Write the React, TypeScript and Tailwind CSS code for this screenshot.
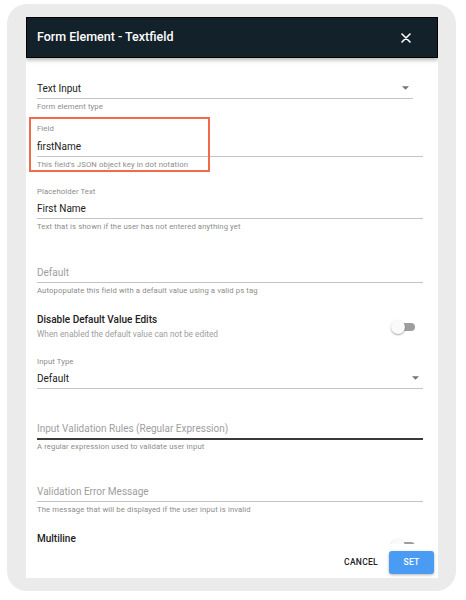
import React from 'react'

const font = { fontFamily: 'Roboto, "Noto Sans", Arial, sans-serif' }

function Caret({ className }: { className?: string }) {
    return (
        <svg viewBox="0 0 10 5" className={className} width="7" height="4">
            <path d="M0 0 L5 5 L10 0 Z" fill="#757575" />
        </svg>
    )
}

function Toggle() {
    return (
        <div className="relative w-[24px] h-[14px] flex items-center">
            <div className="ml-[4px] w-[20px] h-[8px] rounded-full bg-[#9e9e9e]"></div>
            <div className="absolute left-0 top-0 w-[14px] h-[14px] rounded-full bg-[#fafafa] shadow-[0_1px_2px_rgba(0,0,0,0.35)]"></div>
        </div>
    )
}

function Helper({ children, className = 'mt-[3px]' }: { children: React.ReactNode, className?: string }) {
    return <p className={`${className} text-[7.7px] leading-[10px] tracking-[0.12px] text-[#8c8c8c]`}>{children}</p>
}

function Label({ children }: { children: React.ReactNode }) {
    return <p className="text-[7.7px] leading-[10px] tracking-[0.1px] text-[#8c8c8c]">{children}</p>
}

export default function App() {
    return (
        <div className="min-h-screen bg-white pt-[4px] pl-[7px]" style={font}>
            <div className="w-[449px] h-[587px] rounded-[20px] bg-[#ebebeb] pl-[19px] pt-[13px]">
                <div className="w-[412px] h-[561px] bg-white flex flex-col overflow-hidden">
                    {/* Header */}
                    <div className="relative z-10 h-[41px] shrink-0 bg-[#13212a] border border-black shadow-[0_2px_4px_rgba(0,0,0,0.3)] flex items-center justify-between pl-[10px] pr-[26px]">
                        <h1 className="text-white text-[12.5px] font-medium">Form Element - Textfield</h1>
                        <svg viewBox="0 0 10 10" width="10" height="10">
                            <path d="M1 1 L9 9 M9 1 L1 9" stroke="white" strokeWidth="1.6" strokeLinecap="round" />
                        </svg>
                    </div>

                    {/* Content */}
                    <div className="relative h-[486px] shrink-0 overflow-hidden pl-[11px] pr-[15px] pt-[20px] text-[#212121]">
                        {/* Form element type */}
                        <div className="mr-[10px]">
                            <div className="h-[21px] border-b border-[#c4c4c4] flex items-center justify-between pr-[4px]">
                                <span className="text-[10px]">Text Input</span>
                                <Caret />
                            </div>
                            <Helper>Form element type</Helper>
                        </div>

                        {/* Field */}
                        <div className="relative mt-[12px]">
                            <div className="absolute left-[-8px] top-[-7px] w-[181px] h-[55px] border-2 border-[#f2694b]"></div>
                            <Label>Field</Label>
                            <div className="mt-[2px] h-[21px] border-b border-[#c4c4c4] flex items-center">
                                <span className="text-[10px]">firstName</span>
                            </div>
                            <Helper>This field's JSON object key in dot notation</Helper>
                        </div>

                        {/* Placeholder */}
                        <div className="mt-[17px]">
                            <Label>Placeholder Text</Label>
                            <div className="mt-[1px] h-[21px] border-b border-[#c4c4c4] flex items-center">
                                <span className="text-[10px]">First Name</span>
                            </div>
                            <Helper>Text that is shown if the user has not entered anything yet</Helper>
                        </div>

                        {/* Default */}
                        <div className="mt-[30px]">
                            <div className="h-[21px] border-b border-[#c4c4c4] flex items-center">
                                <span className="text-[10px] text-[#9e9e9e]">Default</span>
                            </div>
                            <Helper>Autopopulate this field with a default value using a valid ps tag</Helper>
                        </div>

                        {/* Disable default edits */}
                        <div className="mt-[18px] flex items-start justify-between pr-[8px]">
                            <div>
                                <p className="text-[10px] leading-[12px] font-medium">Disable Default Value Edits</p>
                                <p className="mt-[2px] text-[8.3px] leading-[12px] text-[#9e9e9e]">When enabled the default value can not be edited</p>
                            </div>
                            <div className="mt-[6px]">
                                <Toggle />
                            </div>
                        </div>

                        {/* Input type */}
                        <div className="mt-[17px]">
                            <Label>Input Type</Label>
                            <div className="mt-[1px] h-[21px] border-b border-[#c4c4c4] flex items-center justify-between pr-[4px]">
                                <span className="text-[10px]">Default</span>
                                <Caret />
                            </div>
                        </div>

                        {/* Validation rules */}
                        <div className="mt-[30px]">
                            <div className="h-[21px] border-b-2 border-[#3a3a3a] flex items-center">
                                <span className="text-[10px] text-[#9e9e9e]">Input Validation Rules (Regular Expression)</span>
                            </div>
                            <Helper className="mt-[2px]">A regular expression used to validate user input</Helper>
                        </div>

                        {/* Validation error message */}
                        <div className="mt-[29px]">
                            <div className="h-[21px] border-b border-[#c4c4c4] flex items-center">
                                <span className="text-[10px] text-[#9e9e9e]">Validation Error Message</span>
                            </div>
                            <Helper>The message that will be displayed if the user input is invalid</Helper>
                        </div>

                        {/* Multiline */}
                        <div className="mt-[18px] flex items-start justify-between pr-[8px]">
                            <p className="text-[10px] leading-[12px] font-medium">Multiline</p>
                            <div className="mt-[6px]">
                                <Toggle />
                            </div>
                        </div>
                    </div>

                    {/* Footer */}
                    <div className="flex-1 bg-white flex items-start justify-end pt-[7px] pr-[4px] gap-[11px]">
                        <button className="h-[23px] text-[8.5px] font-medium tracking-[0.3px] text-[#212121]">CANCEL</button>
                        <button className="w-[45px] h-[23px] rounded-[3px] bg-[#4a9bf4] text-white text-[8.5px] font-medium tracking-[0.3px] shadow-[0_1px_3px_rgba(0,0,0,0.3)]">SET</button>
                    </div>
                </div>
            </div>
        </div>
    )
}
